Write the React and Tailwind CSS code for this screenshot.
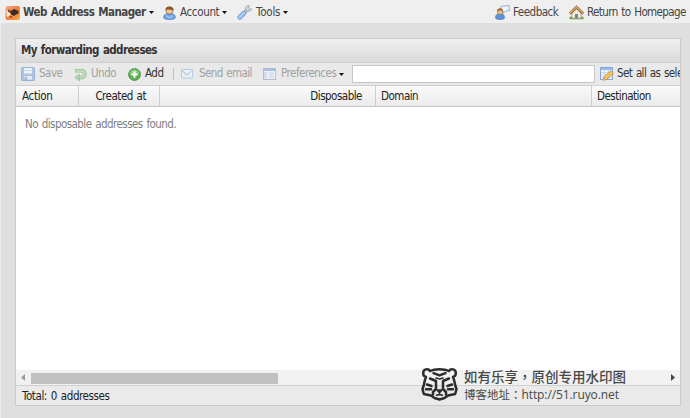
import clsx from 'clsx'

const Caret = () => (
  <svg className="ml-[3px] h-[3px] w-[5px] shrink-0" viewBox="0 0 5 3">
    <path d="M0 0h5L2.500 3z" fill="#111" />
  </svg>
)

const IconApp = () => (
  <svg className="h-4 w-4 shrink-0" viewBox="0 0 16 16">
    <defs>
      <linearGradient id="app" x1="0" y1="0" x2="1" y2="1">
        <stop offset="0" stopColor="#f3b090" />
        <stop offset="0.5" stopColor="#ee7a3c" />
        <stop offset="1" stopColor="#f9ab45" />
      </linearGradient>
    </defs>
    <rect x="0.5" y="1" width="14.500" height="14" rx="2" fill="url(#app)" />
    <path d="M1.500 5.500L5 7l.5 3.500L2 12z" fill="#fbe9dc" />
    <path d="M6.500 5.500L9 4l4.500 2v2.500L11 9.500 9 11 6.500 9.500 5 7.500z" fill="#3d2b22" />
    <path d="M3 4.500l3 1.500-1 2-2-1.500z" fill="#6d3d28" />
    <path d="M4.500 10.500l3 1-2 1.500z" fill="#7a3d20" />
  </svg>
)

const IconUser = () => (
  <svg className="h-[14px] w-[13px] shrink-0" viewBox="0 0 12 14" preserveAspectRatio="none">
    <path d="M.6 11.500C.6 8.500 2.500 7.500 6 7.500s5.400 1 5.400 4c0 1.300-2 2-5.400 2s-5.400-.7-5.400-2z" fill="#6fa4e8" stroke="#4a7ac0" strokeWidth=".7" />
    <path d="M3 9.500L6 12l3-2.500" fill="none" stroke="#a9cbf5" strokeWidth="1.200" />
    <circle cx="6" cy="4.800" r="3.300" fill="#f2c594" stroke="#80562c" strokeWidth=".6" />
    <path d="M2.400 4.800C1.800 1.500 4 .4 6 .4s4.200 1.100 3.600 4.400C8.500 3.600 7 4 5.500 3.400 4 3.300 3 3.800 2.400 4.800z" fill="#875623" />
  </svg>
)

const IconWrench = () => (
  <svg className="h-[15px] w-[15px] shrink-0" viewBox="0 0 15 15">
    <path d="M7 8l3-3" stroke="#9299a3" strokeWidth="3.400" />
    <path d="M7 8l3-3" stroke="#d5d9de" strokeWidth="2" />
    <path d="M12.300.9C10 .2 8 2 8.600 4.300c.4 1.700 2.300 2.500 3.800 1.900 1.200-.4 1.900-1.400 2-2.600l-2 .9-1.200-1.100z" fill="#d5d9de" stroke="#9299a3" strokeWidth=".8" />
    <path d="M2.800 12.200L6.800 8.200" stroke="#6f96d8" strokeWidth="4.800" strokeLinecap="round" />
    <path d="M2.800 12.200L6.800 8.200" stroke="#aac8f6" strokeWidth="3.200" strokeLinecap="round" />
  </svg>
)

const IconFeedback = () => (
  <svg className="h-[15px] w-[15px] shrink-0" viewBox="0 0 15 15">
    <path d="M6 1.200L14 .6l.4 4.900-4 .6L8.200 8.500V6L6.300 5z" fill="#eef5fc" stroke="#7fa6d3" strokeWidth=".9" />
    <path d="M.5 12.800c0-3 1.500-4 4.500-4s4.500 1 4.500 4c0 1-1.500 1.700-4.500 1.700S.5 13.800.5 12.800z" fill="#5b94dd" stroke="#3f6fb4" strokeWidth=".6" />
    <circle cx="5" cy="6.900" r="2.700" fill="#efbf8b" stroke="#80562c" strokeWidth=".5" />
    <path d="M2.200 6.800c-.4-2.500 1-3.500 2.800-3.500s3.200 1 2.800 3C6.500 5.300 4 5.300 2.200 6.800z" fill="#a66b30" />
  </svg>
)

const IconHome = () => (
  <svg className="h-[15px] w-[15px] shrink-0" viewBox="0 0 15 15">
    <path d="M.5 13h14" stroke="#62a84c" strokeWidth="2.600" />
    <path d="M3 8l4.500-4.500L12 8v5.200H3z" fill="#f4efe4" stroke="#9d8a6d" strokeWidth=".7" />
    <path d="M.8 8.700L7.500 2.300l6.700 6.400" fill="none" stroke="#94683a" strokeWidth="2.900" />
    <path d="M1 8.200L7.500 2 14 8.200" fill="none" stroke="#cfa368" strokeWidth="1.600" />
    <path d="M6 9h3v4.200H6z" fill="#7a7f88" />
  </svg>
)

const IconSave = () => (
  <svg className="h-[14px] w-[14px] shrink-0 opacity-65" viewBox="0 0 14 14">
    <rect x=".5" y=".5" width="13" height="13" rx="1" fill="#8fb2e6" stroke="#6a92d0" />
    <path d="M3 1h8v5.500H3z" fill="#f0f6fd" />
    <path d="M3 3.500h8" stroke="#b5d0f0" />
    <path d="M2.500 8.500h9V13h-9z" fill="#e4ecf5" stroke="#6d93c9" strokeWidth=".6" />
    <path d="M3.500 9.700h2.500V13H3.500z" fill="#809bc4" />
  </svg>
)

const IconUndo = () => (
  <svg className="h-[13px] w-[13px] shrink-0 opacity-60" viewBox="0 0 13 13">
    <path d="M1 2.800h7a3.400 3.400 0 0 1 0 6.700H5" fill="none" stroke="#58a05a" strokeWidth="3.600" />
    <path d="M1.600 2.800H8a3.400 3.400 0 0 1 0 6.700H5" fill="none" stroke="#9fd6a0" strokeWidth="2.200" />
    <path d="M5.500 6v7L.7 9.500z" fill="#8dc98f" stroke="#58a05a" strokeWidth=".6" />
  </svg>
)

const IconAdd = () => (
  <svg className="h-[13px] w-[13px] shrink-0" viewBox="0 0 13 13">
    <circle cx="6.500" cy="6.500" r="5.900" fill="#5cb054" stroke="#448f42" strokeWidth=".9" />
    <path d="M1.600 6.300a4.900 4.900 0 0 1 9.800 0c-3-1.500-6-1.500-9.800 0z" fill="#a0d890" opacity=".7" />
    <path d="M6.500 3.300v6.400M3.300 6.500h6.400" stroke="#fff" strokeWidth="2" />
  </svg>
)

const IconMail = () => (
  <svg className="h-[10px] w-3 shrink-0 opacity-60" viewBox="0 0 12 10">
    <rect x=".5" y=".5" width="11" height="8.500" rx=".5" fill="#f1f7fd" stroke="#94b5e0" />
    <path d="M1.500 2L6 5.800 10.500 2" fill="none" stroke="#8aaede" strokeWidth="1.100" />
    <path d="M1.500 8.500l3-3.500M10.500 8.500l-3-3.500" fill="none" stroke="#c3d6ee" strokeWidth=".8" />
  </svg>
)

const IconPreferences = () => (
  <svg className="h-3 w-[13px] shrink-0 opacity-60" viewBox="0 0 13 12">
    <rect x=".5" y=".5" width="12" height="11" fill="#fafcff" stroke="#82a4d6" />
    <path d="M1 1h11v2H1z" fill="#7aa3e3" />
    <path d="M1 3.500h3V11H1z" fill="#d4e5fa" />
    <path d="M1.500 5h2m-2 2h2m-2 2h2M5.500 5H11M5.500 7H11M5.500 9H11" stroke="#9aafcb" strokeWidth=".8" />
  </svg>
)

const IconEditTable = () => (
  <svg className="h-[14px] w-[14px] shrink-0" viewBox="0 0 14 14">
    <rect x=".5" y=".5" width="12" height="12" fill="#f5faff" stroke="#86a8d2" />
    <path d="M1 1h11v2.200H1z" fill="#96bde8" />
    <path d="M1 5.500h11M1 8h11M1 10.500h11M4.500 3v9M8.500 3v9" stroke="#c0d4ea" strokeWidth=".8" />
    <path d="M3 13.300l1-3.800 6.800-5.800 2.700 2.700-6.800 6z" fill="#f5c25e" stroke="#b78232" strokeWidth=".7" />
    <path d="M3 13.300l1-3.800 2.700 2.900z" fill="#e9a77c" />
  </svg>
)

const Tiger = () => (
  <svg className="h-[34px] w-[37px] shrink-0" viewBox="0 0 37 34" fill="none" stroke="#2d2d2d" strokeWidth="2.500" strokeLinecap="round" strokeLinejoin="round">
    <path d="M9 4c2.500-1.300 6-1.800 9.500-1.800S25.500 2.700 28 4" />
    <path d="M9 4C7.500 1.200 2.200 1.800 2.200 6c0 2.300 1 3.600 2.800 4-1.300 2.800-1.500 5.500-2.300 8.500L1.500 22l1.300 5 7.200 1.500 3.500 2.500 5 1.500 5-1.500 3.500-2.500 7.200-1.500 1.300-5-1.200-3.500c-.8-3-1-5.700-2.300-8.500 1.800-.4 2.800-1.700 2.800-4 0-4.200-5.300-4.800-6.800-2" />
    <path d="M12.500 6.200l6 2.200 6-2.200" />
    <path d="M9 11.500l6 2.500v8l-3 3v2.500M28 11.500l-6 2.500v8l3 3v2.500" />
    <path d="M15 11l3.500 1 3.500-1" strokeWidth="1.700" />
    <path d="M6 17.500l4.500 1.500M5 22.300h5M31 17.500L26.500 19M32 22.300h-5" />
    <path d="M16 23h5l-2.500 2.800zM18.500 26v1.500M15.500 28.300l3-.8 3 .8" fill="#2d2d2d" strokeWidth="1.600" />
  </svg>
)

const MenuItem = ({ icon, label, className, menu }) => (
  <button className={clsx('flex h-6 shrink-0 items-center whitespace-nowrap', className)}>
    {icon}
    <span className="flex items-center [word-spacing:1px]">
      {label}
      {menu && <Caret />}
    </span>
  </button>
)

const columns = [
  { name: 'Action', style: 'w-[63px] border-r pl-[6px] tracking-[-0.3px]' },
  { name: 'Created at', style: 'w-[81px] border-r pr-[13px] text-right' },
  { name: 'Disposable', style: 'w-[216px] border-r pr-[13px] text-right' },
  { name: 'Domain', style: 'w-[216px] border-r pl-[5px]' },
  { name: 'Destination', style: 'w-[160px] pl-[5px]' },
]

export default function App() {
  return (
    <div className="flex h-[418px] w-[690px] flex-col overflow-hidden border-l border-[#eee] bg-[#dfdfdf] font-['DejaVu_Sans_Condensed','DejaVu_Sans',sans-serif] text-[11.5px] font-stretch-condensed tracking-[-0.5px] [word-spacing:1px] text-[#444]">
      {/* Main menu */}
      <nav className="flex h-[23px] shrink-0 items-center bg-[#efefef] pt-[2px] pl-1">
        <MenuItem icon={<IconApp />} label="Web Address Manager" menu className="w-[158px] gap-[2px] font-bold tracking-[-0.55px]" />
        <MenuItem icon={<IconUser />} label="Account" menu className="w-[74px] gap-[4px] tracking-[-0.35px]" />
        <MenuItem icon={<IconWrench />} label="Tools" menu className="gap-[4px] tracking-[-0.2px]" />
        <div className="ml-auto flex">
          <MenuItem icon={<IconFeedback />} label="Feedback" className="w-[74px] gap-[3px]" />
          <MenuItem icon={<IconHome />} label="Return to Homepage" className="w-[121px] gap-[3px] tracking-[-0.6px]" />
        </div>
      </nav>

      <main className="mt-[15px] ml-[14px] flex h-[368px] w-[666px] flex-col border border-[#c9c9c9] bg-white">
        <h1 className="flex h-6 shrink-0 items-center border-b border-[#d0d0d0] bg-linear-to-b from-[#efefef] to-[#dadada] pl-[5px] font-bold tracking-[-0.6px] text-[#333]">
          My forwarding addresses
        </h1>

        {/* Toolbar */}
        <div className="flex h-[23px] shrink-0 items-center overflow-hidden border-b border-[#d0d0d0] bg-[#e9e9e9] pl-[5px] text-[#a0a0a0]">
          <MenuItem icon={<IconSave />} label="Save" className="w-[53px] gap-[4px]" />
          <MenuItem icon={<IconUndo />} label="Undo" className="w-[54px] gap-[4px]" />
          <MenuItem icon={<IconAdd />} label="Add" className="w-[45px] gap-[4px] text-[#333]" />
          <span className="mr-[7px] h-3 w-px shrink-0 bg-[#bdbdbd]" />
          <MenuItem icon={<IconMail />} label="Send email" className="w-[82px] gap-[6px] tracking-[-0.6px]" />
          <MenuItem icon={<IconPreferences />} label="Preferences" menu className="w-[89px] gap-[5px]" />
          <input className="h-[18px] w-[243px] shrink-0 border border-[#c3c5cb] bg-white px-1 outline-none" />
          <MenuItem icon={<IconEditTable />} label="Set all as sele" className="ml-[5px] gap-[3px] tracking-[-0.6px] text-[#333]" />
        </div>

        <div className="flex h-[21px] shrink-0 overflow-hidden border-b border-[#c5c5c5] bg-linear-to-b from-[#fafafa] to-[#ebebeb] leading-5 text-[#222]">
          {columns.map((col) => (
            <div key={col.name} className={clsx('shrink-0 border-[#cfcfcf]', col.style)}>{col.name}</div>
          ))}
        </div>

        <div className="flex-1 pt-[9px] pl-[9px] leading-4 tracking-[-0.55px] text-[#808080]">No disposable addresses found.</div>

        {/* Horizontal scrollbar */}
        <div className="flex h-[15px] shrink-0 items-center bg-[#f1f1f1] pr-[5px] pl-[5px]">
          <svg className="h-[7px] w-1" viewBox="0 0 4 7"><path d="M4 0v7L0 3.500z" fill="#9d9d9d" /></svg>
          <div className="mt-px ml-[6px] h-[11px] w-[247px] bg-[#c1c1c1]" />
          <svg className="ml-auto h-[7px] w-1" viewBox="0 0 4 7"><path d="M0 0v7l4-3.500z" fill="#444" /></svg>
        </div>
        <footer className="flex h-5 shrink-0 items-center border-t border-[#d0d0d0] bg-[#eaeaea] pt-[2px] pl-[6px] tracking-[-0.42px] text-[#222]">
          Total: 0 addresses
        </footer>
      </main>

      {/* Watermark */}
      <div className="absolute top-[367px] left-[421px] flex gap-[6px] font-['Noto_Sans_CJK_TC',sans-serif] font-stretch-normal tracking-normal whitespace-nowrap text-[#484848]">
        <Tiger />
        <div>
          <p className="text-[13.5px] leading-[18px] font-medium" lang="zh-TW">如有乐享，原创专用水印图</p>
          <p className="text-[11.5px] leading-[18px]" lang="zh-TW">
            博客地址：<span className="font-['Open_Sans',sans-serif] text-[12px] tracking-[-0.1px]">http://51.ruyo.net</span>
          </p>
        </div>
      </div>
    </div>
  )
}
